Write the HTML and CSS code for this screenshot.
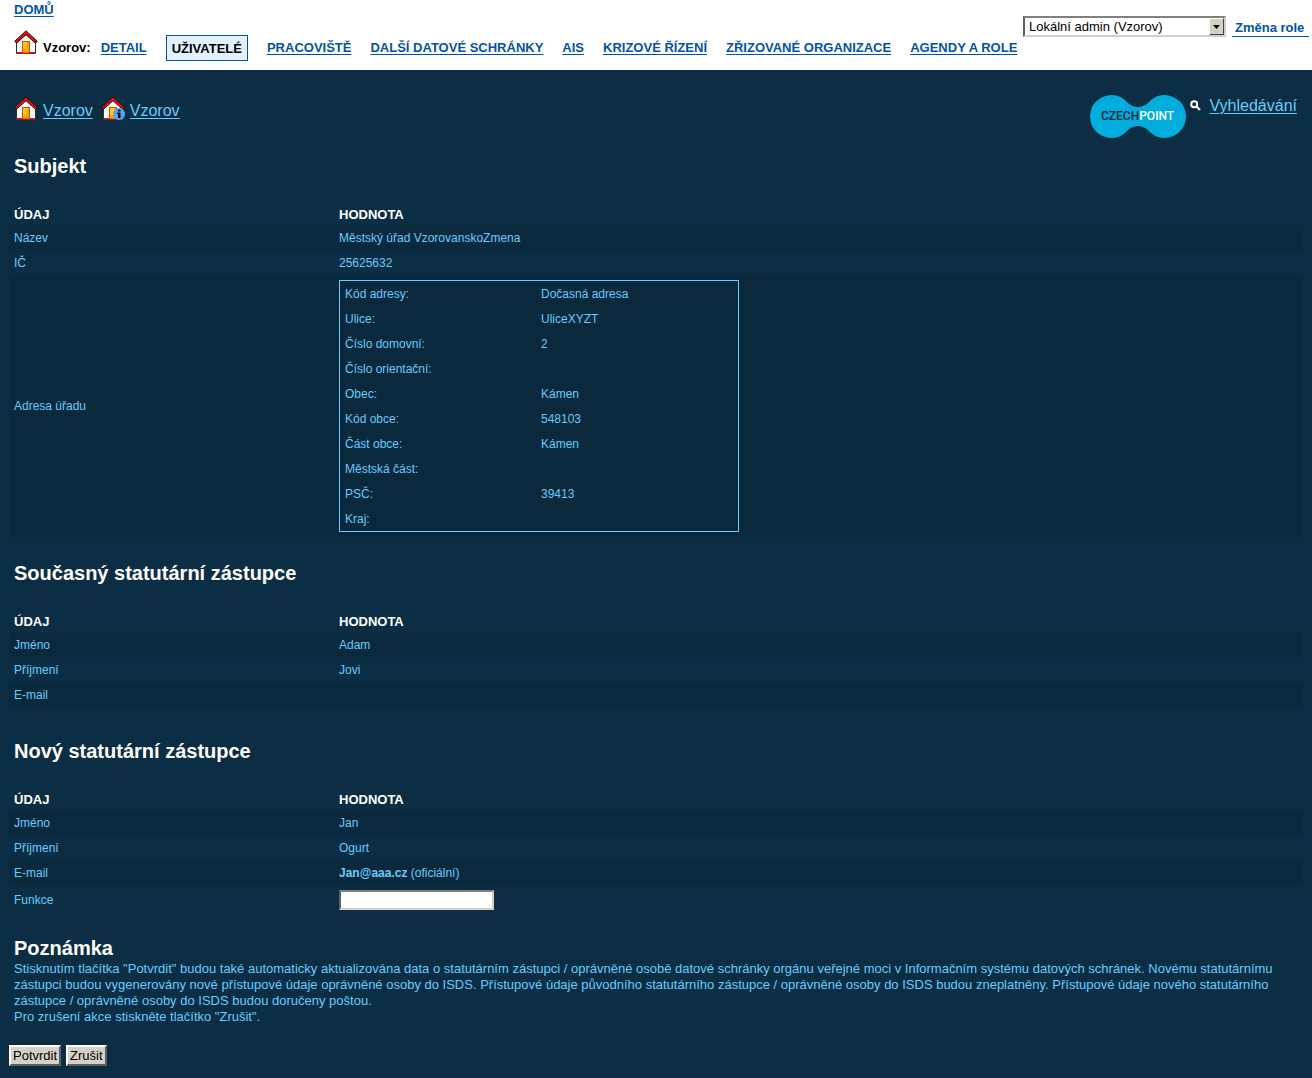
FILE: index.html
```html
<!DOCTYPE html>
<html lang="cs">
<head>
<meta charset="utf-8">
<title>Vzorov – uživatelé</title>
<link rel="stylesheet" href="styles.css">
</head>
<body>
<svg class="sprite" aria-hidden="true">
  <symbol id="house" viewBox="0 0 24 25">
    <path d="M2.500 11.500V23.500h19V11.500L12 2.500z" fill="#fff" stroke="#333" stroke-width="1"/>
    <path d="M3 22h18v1.500H3z" fill="#d8141c"/>
    <path d="M8 11h8V23H8z" fill="#c8500c"/>
    <path d="M9 12h6V22.500H9z" fill="#ff9c0a"/>
    <path d="M9 12h4v7H9z" fill="#ffc81e"/>
    <path d="M.8 11.200L12 .8l11.200 10.400-1.700 2L12 4.800 2.500 13.200z" fill="#e00b14" stroke="#221111" stroke-width="1"/>
  </symbol>
</svg>
<header class="top">
  <div class="top-left">
    <a class="home" href="#">DOMŮ</a>
    <div class="menu">
      <svg class="house" aria-hidden="true"><use href="#house"/></svg>
      <strong class="menu-title">Vzorov:</strong>
      <nav class="menu-links">
        <a href="#">DETAIL</a>
        <a class="current" href="#">UŽIVATELÉ</a>
        <a href="#">PRACOVIŠTĚ</a>
        <a href="#">DALŠÍ DATOVÉ SCHRÁNKY</a>
        <a href="#">AIS</a>
        <a href="#">KRIZOVÉ ŘÍZENÍ</a>
        <a href="#">ZŘIZOVANÉ ORGANIZACE</a>
        <a href="#">AGENDY A ROLE</a>
      </nav>
    </div>
  </div>
  <div class="role">
    <div class="select-box">
      <select aria-label="Role"><option>Lokální admin (Vzorov)</option></select>
      <span class="select-arrow"><svg width="7" height="4" viewBox="0 0 7 4"><path d="M0 0h7L3.500 4z"/></svg></span>
    </div>
    <a class="role-change" href="#">Změna role</a>
  </div>
</header>
<main>
  <div class="bar">
    <nav class="crumbs">
      <svg class="house" aria-hidden="true"><use href="#house"/></svg>
      <a href="#">Vzorov</a>
      <svg class="house second" viewBox="0 0 24 25" aria-hidden="true">
        <use href="#house" width="24" height="25"/>
        <circle cx="18" cy="18" r="6" fill="#4da9f5"/>
        <path d="M17 13.500h2.500v2H17zM16 16.500h3.500V22H17v-4h-1z" fill="#111"/>
      </svg>
      <a href="#">Vzorov</a>
    </nav>
    <div class="tools">
      <svg class="logo" viewBox="0 0 96 43" role="img" aria-label="CzechPOINT">
        <path d="M21.500 0C30 0 34 4 38 8c6 5.500 14 5.500 20 0 4-4 8-8 16.500-8a21.500 21.500 0 0 1 0 43C66 43 62 39 58 35c-6-5.500-14-5.500-20 0-4 4-8 8-16.500 8a21.500 21.500 0 0 1 0-43z" fill="#00addc"/>
        <text class="logo-text" x="11" y="25" fill="#112233">CZECH<tspan fill="#fff">POINT</tspan></text>
      </svg>
      <svg class="lens" viewBox="0 0 11 11" aria-hidden="true"><circle cx="4.200" cy="4.200" r="3" fill="none" stroke="#fff" stroke-width="2"/><path d="M6.500 6.500l3.500 3.500" stroke="#fff" stroke-width="2.200"/></svg>
      <a href="#">Vyhledávání</a>
    </div>
  </div>

  <section>
    <h2>Subjekt</h2>
    <table class="data">
      <thead><tr><th>ÚDAJ</th><th>HODNOTA</th></tr></thead>
      <tbody>
        <tr><td>Název</td><td>Městský úřad VzorovanskoZmena</td></tr>
        <tr><td>IČ</td><td>25625632</td></tr>
        <tr><td>Adresa úřadu</td><td>
          <table class="address">
            <tr><td>Kód adresy:</td><td>Dočasná adresa</td></tr>
            <tr><td>Ulice:</td><td>UliceXYZT</td></tr>
            <tr><td>Číslo domovní:</td><td>2</td></tr>
            <tr><td>Číslo orientační:</td><td></td></tr>
            <tr><td>Obec:</td><td>Kámen</td></tr>
            <tr><td>Kód obce:</td><td>548103</td></tr>
            <tr><td>Část obce:</td><td>Kámen</td></tr>
            <tr><td>Městská část:</td><td></td></tr>
            <tr><td>PSČ:</td><td>39413</td></tr>
            <tr><td>Kraj:</td><td></td></tr>
          </table>
        </td></tr>
      </tbody>
    </table>
  </section>

  <section>
    <h2>Současný statutární zástupce</h2>
    <table class="data">
      <thead><tr><th>ÚDAJ</th><th>HODNOTA</th></tr></thead>
      <tbody>
        <tr><td>Jméno</td><td>Adam</td></tr>
        <tr><td>Příjmení</td><td>Jovi</td></tr>
        <tr><td>E-mail</td><td></td></tr>
      </tbody>
    </table>
  </section>

  <form class="new-person">
    <h2>Nový statutární zástupce</h2>
    <table class="data">
      <thead><tr><th>ÚDAJ</th><th>HODNOTA</th></tr></thead>
      <tbody>
        <tr><td>Jméno</td><td>Jan</td></tr>
        <tr><td>Příjmení</td><td>Ogurt</td></tr>
        <tr><td>E-mail</td><td><b>Jan@aaa.cz</b> (oficiální)</td></tr>
        <tr><td><label for="funkce">Funkce</label></td><td><input class="field" id="funkce" type="text"></td></tr>
      </tbody>
    </table>
    <h2 class="note-title">Poznámka</h2>
    <p class="note">Stisknutím tlačítka "Potvrdit" budou také automaticky aktualizována data o statutárním zástupci / oprávněné osobě datové schránky orgánu veřejné moci v Informačním systému datových schránek. Novému statutárnímu zástupci budou vygenerovány nové přístupové údaje oprávněné osoby do ISDS. Přístupové údaje původního statutárního zástupce / oprávněné osoby do ISDS budou zneplatněny. Přístupové údaje nového statutárního zástupce / oprávněné osoby do ISDS budou doručeny poštou.<br>Pro zrušení akce stiskněte tlačítko "Zrušit".</p>
    <div class="actions">
      <button type="submit">Potvrdit</button>
      <button type="button">Zrušit</button>
    </div>
  </form>
</main>
</body>
</html>
```
FILE: styles.css
```css
* { box-sizing: border-box; }

body {
  margin: 0;
  background: #0c2e44;
  color: #66ccff;
  font-family: "Liberation Sans", Arial, sans-serif;
  font-size: 12px;
}

.sprite { display: none; }

.house {
  width: 24px;
  height: 25px;
  flex: none;
}

/* White header */
.top {
  display: flex;
  justify-content: space-between;
  height: 70px;
  padding: 2px 3px 0 14px;
  background: #fff;
  color: #000;
  font-size: 13px;
  line-height: 16px;
}

.top a {
  color: #0054a6;
  font-weight: bold;
}

.top-left { white-space: nowrap; }

.home {
  display: block;
  width: max-content;
}

.top a,
.crumbs a,
.tools a {
  text-underline-offset: 2px;
  text-decoration-thickness: 1px;
}

.menu {
  display: flex;
  align-items: center;
  margin-top: 12px;
}

.menu .house { margin-bottom: 6px; }

.menu-title { margin: 4px 10px 0 5px; }

.menu-links {
  display: flex;
  align-items: center;
  gap: 19px;
  margin-top: 4px;
}

.menu-links .current {
  padding: 5px 5px 3px;
  border: 1px solid #0054a6;
  background: #e3f1ff;
  color: #000;
  text-decoration: none;
}

.role {
  display: flex;
  align-items: flex-start;
  gap: 6px;
  padding-top: 14px;
  flex: none;
}

.select-box {
  position: relative;
  width: 203px;
}

.select-box select {
  appearance: none;
  display: block;
  width: 100%;
  height: 21px;
  padding: 0 20px 0 4px;
  border: 2px solid;
  border-color: #808080 #d4d0c8 #d4d0c8 #606060;
  border-radius: 0;
  background: #fff;
  color: #000;
  font: 13px "Liberation Sans", Arial, sans-serif;
}

.select-arrow {
  position: absolute;
  top: 2px;
  right: 2px;
  display: flex;
  align-items: center;
  justify-content: center;
  width: 15px;
  height: 17px;
  border: 1px solid;
  border-color: #fff #404040 #404040 #fff;
  background: #d4d0c8;
  pointer-events: none;
}

.role .role-change {
  padding: 4px 2px 0 3px;
  border-bottom: 1px solid #0054a6;
  text-decoration: none;
  white-space: nowrap;
  min-width: 77px;
}

/* Page body */
main { padding: 24px 9px 12px; }

.bar {
  display: flex;
  justify-content: space-between;
  align-items: flex-start;
  height: 60px;
  padding: 0 6px 0 5px;
  font-size: 16px;
  line-height: 20px;
}

.bar a { color: #66ccff; }

.crumbs {
  display: flex;
  gap: 5px;
  padding-top: 2px;
}

.crumbs a { margin-top: 5px; }

.crumbs .second { margin-left: 3px; }

.tools {
  display: flex;
  align-items: flex-start;
}

.tools a { margin-top: 2px; }

.logo {
  width: 96px;
  height: 43px;
  margin: 1px 4px 0 0;
}

.logo-text { font: 500 12px Roboto, sans-serif; }

.lens {
  width: 11px;
  height: 11px;
  margin: 6px 9px 0 0;
}

h2 {
  margin: 0 5px 25px;
  color: #fff;
  font-size: 20px;
  line-height: 24px;
}

section { margin-bottom: 24px; }

.new-person { margin-top: 32px; }

table {
  border-collapse: separate;
  border-spacing: 0;
}

.data {
  width: 100%;
  table-layout: fixed;
}

.data th {
  height: 22px;
  padding: 0 5px;
  color: #fff;
  font-size: 13px;
  text-align: left;
}

.data th:first-child { width: 325px; }

.data td {
  height: 25px;
  padding: 0 5px;
}

.data > tbody > tr:nth-child(odd) > td { background: #0b293c; }

.data > tbody > tr > td:first-child { border-radius: 2px 0 0 2px; }

.data > tbody > tr > td:last-child { border-radius: 0 2px 2px 0; }

.data .address {
  width: 400px;
  margin: 5px 0;
  border: 1px solid #66ccff;
  table-layout: fixed;
}

.data .address td { background: none; }

.address td:first-child { width: 196px; }

.field {
  display: block;
  width: 155px;
  height: 20px;
  margin: 5px 0;
  padding: 0 4px;
  border: 2px solid;
  border-color: #808080 #d4d0c8 #d4d0c8 #606060;
  background: #fff;
}

.note-title { margin: 21px 5px 0; }

.note {
  margin: 1px 5px 0;
  font-size: 13px;
  line-height: 16px;
}

.actions {
  display: flex;
  gap: 5px;
  margin-top: 20px;
}

.actions button {
  height: 21px;
  padding: 0 2px;
  border: 2px solid;
  border-color: #fff #606060 #606060 #fff;
  background: #d4d0c8;
  color: #000;
  font: 13px "Liberation Sans", Arial, sans-serif;
}
```
